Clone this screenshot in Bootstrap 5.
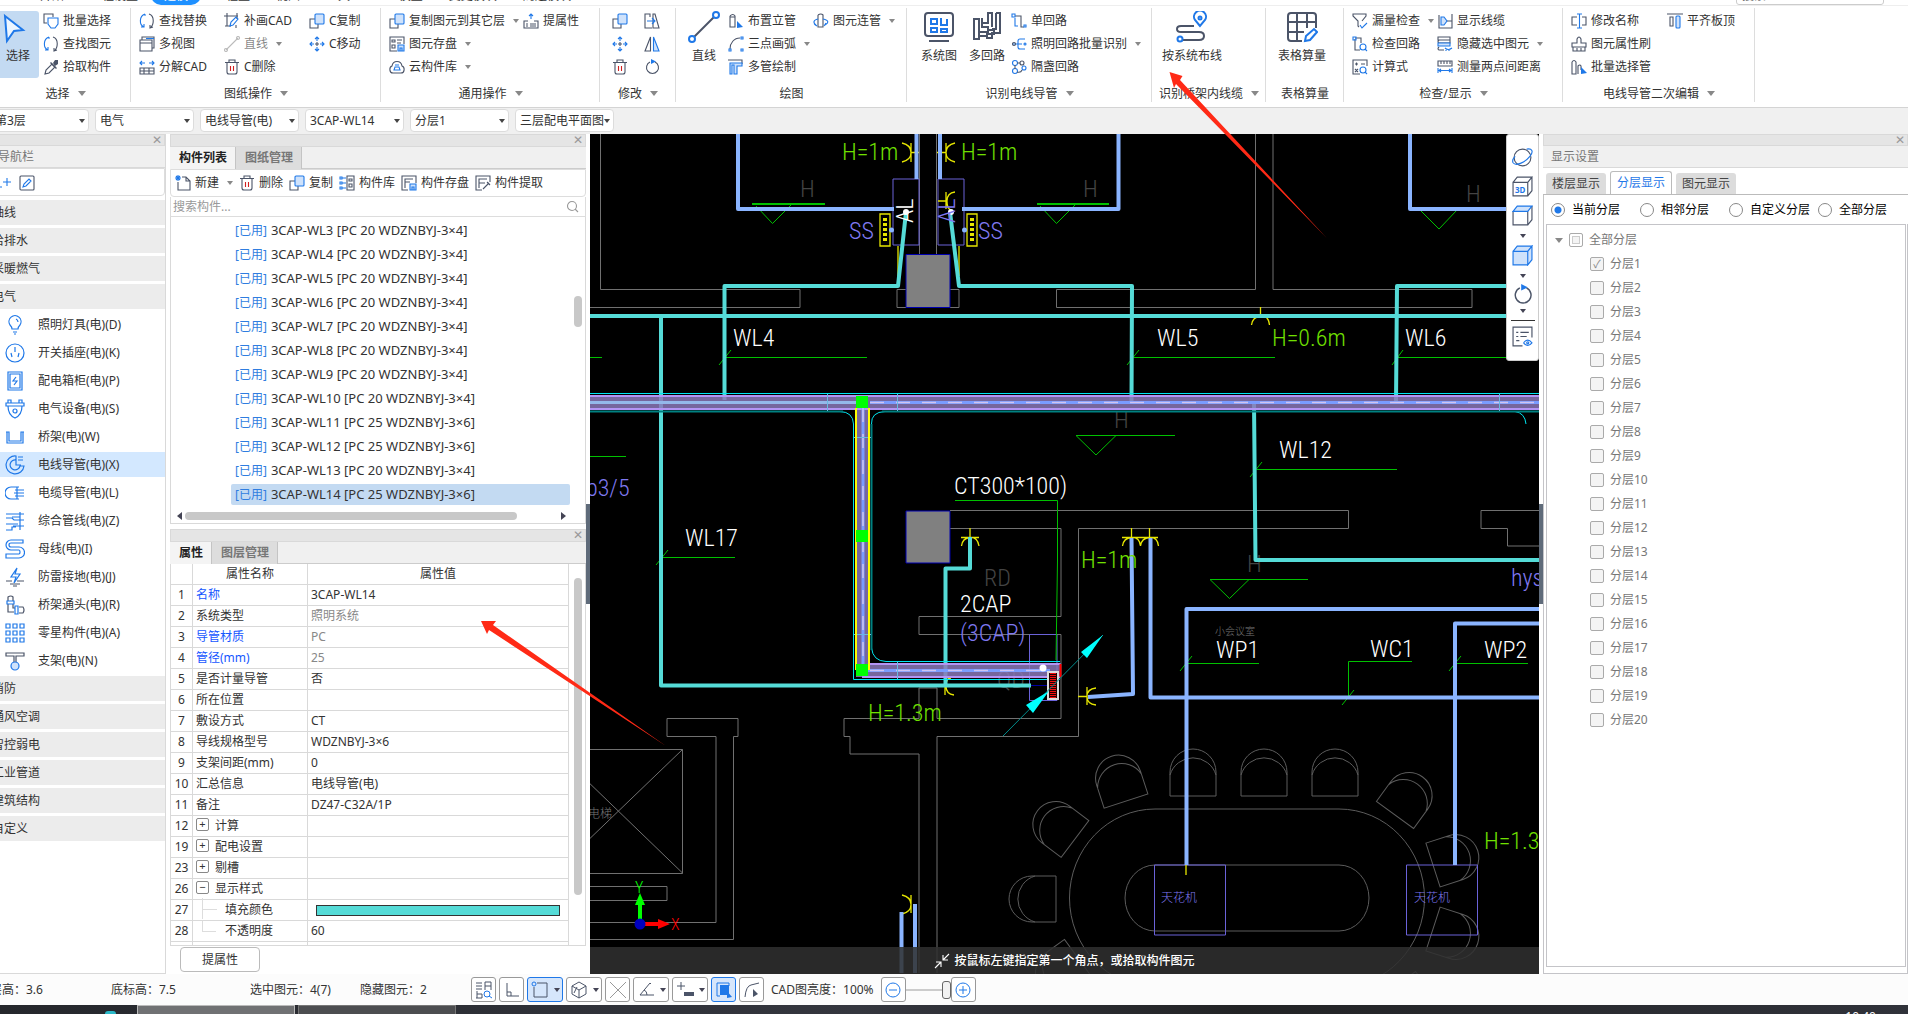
<!DOCTYPE html>
<html lang="zh-CN">
<head>
<meta charset="utf-8">
<meta name="viewport" content="width=device-width, initial-scale=1">
<title>安装算量</title>
<link rel="stylesheet" href="https://cdn.jsdelivr.net/npm/bootstrap@5.3.0/dist/css/bootstrap.min.css">
<style>
:root{--ink:#333;--blue:#1f78e8;--dark:#4b5468;--line:#d9d9d9;--grey:#f0f0f0}
body{font-family:"Noto Sans","Noto Sans CJK SC",sans-serif;font-size:12px;line-height:18px;color:var(--ink);background:#fff;height:100vh;overflow:hidden}
button{font:inherit;color:inherit;background:none;border:0;padding:0;white-space:nowrap}
svg{flex:none}
.ic{width:16px;height:16px;fill:none;stroke-width:1.1}
.d{stroke:var(--dark);fill:none}.b{stroke:var(--blue);fill:none}.r{stroke:#d02020;fill:none}
.bf{fill:var(--blue);stroke:none}.df{fill:var(--dark);stroke:none}.lf{fill:#cfe2fb;stroke:var(--blue)}
.caret{display:inline-block;border:4px solid transparent;border-top:5px solid #888;border-bottom:0;margin-left:8px;vertical-align:2px}
.caret.sm{border-width:3px;border-top-width:4px;margin-left:5px}
.menus{height:6px;border-bottom:1px solid #eee}
.menus a{color:var(--ink);text-decoration:none;padding:0 13px;white-space:nowrap}
.menus a.on{background:#1e90ff;color:#fff;border-radius:0 0 10px 10px}
.menus .find{width:148px;height:18px;border:1px solid #ccc;border-radius:3px;font-size:12px;padding:0 5px}
/* ribbon */
.ribbon{height:102px;border-bottom:1px solid #d4d4d4}
.grp{display:flex;flex-direction:column;position:relative;padding-top:3px}
.grp::after{content:"";position:absolute;right:0;top:2px;bottom:5px;width:1px;background:#ddd}
.grp .cols{display:flex;height:69px}
.grp .lab{margin-top:7px;text-align:center;white-space:nowrap}
.rb{display:flex;align-items:center;gap:4px;height:23px}
.rb .caret{margin-left:4px}
.big{display:flex;flex-direction:column;align-items:center;width:48px}
.big svg{width:32px;height:32px;margin:2px 0 4px;stroke-width:2}
.big.on{background:#c3daf2;border-radius:0 3px 3px 0;width:39px;height:67px;margin:2px 4px 0 0;padding-right:3px}
.big.on svg{margin:2px 0 2px}
.c84{width:85px}.c96{width:96px}.c134{width:134px}.c32{width:32px}
.g1{width:131px}.g2{width:250px}.g3{width:219px}.g4{width:76px}.g5{width:231px}.g6{width:245px}.g7{width:114px}.g8{width:78px}.g9{width:219px}.g10{width:192px}
/* context selectors */
.ctxbar{background:var(--grey)}
.ctx{height:26px;padding-top:1px;gap:6px;margin-left:-10px}
.pick{position:relative;width:99px;height:23px}
.pick select{appearance:none;width:100%;height:100%;border:1px solid #dcdcdc;border-radius:4px;background:#fff;padding:0 0 0 4px;color:var(--ink);font-size:12px}
.pick::after{content:"";position:absolute;right:4px;top:10px;border:3px solid transparent;border-top:4px solid #444;border-bottom:0;pointer-events:none}
/* docks */
.strip{height:12px;background:#e5e5e5;border:1px solid var(--line);padding-right:2px}
.strip button{line-height:9px;display:block;margin-left:auto;height:9px;color:#999}
.mid-dock .strip{height:13px}
.head{height:22px;background:var(--grey);border-bottom:1px solid var(--line);color:#777;line-height:21px}
.tools{height:28px;border:1px solid #ddd;border-radius:0 0 4px 4px}
.mid-dock .tools{gap:6px}
.nav-dock{width:176px;margin-left:-10px;border-right:1px solid var(--line);border-bottom:1px solid var(--line)}
.side-item{display:flex;align-items:center;height:25px;margin-bottom:3px;width:100%;text-align:left;padding-left:2px}
.side-item.cat{background:#ececec}
.side-item.leaf{padding-left:15px;gap:13px}
.side-item.leaf svg{width:20px;height:20px;stroke-width:1.2}
.side-item.on{background:#d3e8ff}
.mid-dock{width:416px;margin-left:4px}
.dtabs{height:22px;background:var(--grey);border-bottom:1px solid #ccc}
.dtabs button{height:22px;padding:0 8px 0 9px;background:#ddd;color:#777;font-weight:600;border-right:1px solid #c4c4c4}
.dtabs button.on{background:#f4f4f4;color:#222}
.finder{height:20px;border:1px solid #ddd;border-top:0}
.finder input{border:0;outline:0;width:100%;font-size:12px;padding:0 2px;height:18px;color:#555}
.finder input::placeholder{color:#999}
.list{height:307px;border:1px solid var(--line);border-top:0;position:relative;padding:3px 15px 0 60px;overflow:hidden;margin-bottom:5px}
.list button{display:block;width:100%;height:21px;margin-bottom:3px;text-align:left;padding-left:4px;line-height:21px;border-radius:2px;font-size:13px}
.list button i{font-style:normal;font-size:12px;color:#2f7de0;margin-right:4px}
.list button.on{background:#c3daf2}
.thumb{position:absolute;background:#c8c8c8;border-radius:4px}
.v1{right:3px;top:79px;width:8px;height:31px}.h1b{left:14px;bottom:3px;width:332px;height:8px}
.v2{right:3px;top:14px;width:8px;height:317px}
.tri{position:absolute;bottom:3px;border:4px solid transparent}
.tri.l{left:2px;border-right:5px solid #445}.tri.rr{right:15px;border-left:5px solid #445}
.props{height:382px;border:1px solid var(--line);border-top:0;position:relative;overflow:hidden}
.props table{width:398px;table-layout:fixed;border-collapse:separate;border-spacing:0}
.props td,.props th{height:21px;padding:0 3px;border-bottom:1px solid var(--line);border-right:1px solid var(--line);line-height:20px;white-space:nowrap;font-weight:400}
.props th{text-align:center}
.props td:first-child{text-align:center;padding:0}
.props .key{color:#1657ff}.props .ro{color:#888}
.pm{width:13px;height:13px;border:1px solid #888;border-radius:2px;line-height:10px;font-size:11px;margin:0 6px 0 0;vertical-align:2px}
.twig{display:inline-block;width:14px;height:21px;border-left:1px solid #ddd;position:relative;margin:-10px 9px -6px 6px;vertical-align:middle}
.twig::after{content:"";position:absolute;left:0;top:11px;width:14px;border-top:1px solid #ddd}
.twig.end{height:11px;border-bottom:1px solid #ddd;margin-bottom:0}.twig.end::after{display:none}
.swatch{display:block;height:11px;background:#55dbd7;border:1px solid #333;margin:0 5px}
.more{width:80px;height:25px;border:1px solid #bbb;border-radius:4px;margin:1px 0 0 10px}
.split{width:4px;display:flex;align-items:center}
.split button{width:4px;height:100px;background:#5f6b7a}
/* drawing */
.board{background:#000;min-width:0;overflow:hidden}
.board>svg{position:absolute;left:0;top:0;width:949px;height:840px}
.board text{font-family:"Liberation Sans Narrow","Roboto Condensed",Roboto,sans-serif;font-weight:300;font-size:24px}
.board text.cj{font-family:"Noto Sans CJK SC",sans-serif}
.board text.c12{font-size:12px}.board text.c10{font-size:10px}.board text.ax{font-size:16px}
.board text.d3{font:700 8px "Noto Sans",sans-serif}
.tip{position:absolute;left:0;right:0;bottom:0;height:27px;background:rgba(48,48,48,.86);color:#fff;font-weight:500}
.views{position:absolute;right:0;top:0;width:33px;height:227px;background:#fff;border:1px solid #ccc;border-radius:3px;padding-top:12px}
.views svg{width:21px;height:21px;stroke-width:1.1;margin-bottom:8px}
.views .caret{margin:0 0 7px;border-top-color:#445;border-width:3px;border-top-width:4px}
.views .flat{margin:-1px 0 4px}
.views hr{width:24px;margin:0 0 5px;border-color:#333;opacity:1}
.right-dock{width:365px}
.rtabs{height:27px;padding:5px 0 0 3px;gap:4px;border-bottom:1px solid #bbb}
.rtabs button{height:21px;padding:0 6px;background:#dcdcdc;border-radius:3px 3px 0 0;color:#444}
.rtabs button.on{background:#fff;color:var(--blue);border:1px solid #bbb;border-bottom:0;height:23px;margin-top:-2px}
.opts{height:29px;color:#000;border-left:1px solid #c4c4c4;gap:20px;padding-left:7px}
.opts label{display:flex;align-items:center;gap:7px;white-space:nowrap}
.opts label:last-child{margin-left:-12px}
.opts input{appearance:none;width:14px;height:14px;border:1px solid #888;border-radius:50%;margin:0}
.opts input:checked{background:radial-gradient(circle,var(--blue) 3px,#fff 4px)}
.tree{border:1px solid #c4c4c8;margin:0 1px 6px 2px;color:#777;padding-top:3px}
.tree label{display:flex;align-items:center;height:24px;gap:6px;padding-left:43px}
.tree label.top{padding-left:8px}
.tree input{appearance:none;width:14px;height:14px;border:1px solid #aaa;border-radius:2px;margin:0;background:#f4f4f4;text-align:center;line-height:12px}
.tree input:checked::before{content:"✓";color:#888;font-size:11px;display:block}
.tree .top input{box-shadow:inset 0 0 0 2px #fff,inset 0 0 0 3px #ccc}
.right-box{border:1px solid #c4c4c8;border-top:0}
/* status */
.status{height:31px;background:#fcfcfc;gap:3px}
.sb{height:25px;min-width:25px;border:1px solid #999;border-radius:3px;display:inline-flex;align-items:center;justify-content:center;background:#fff}
.sb svg{width:18px;height:18px}
.sb.on{background:#d6e6fb;border-color:var(--blue)}
.sb.w{width:36px}.sb .caret{border-top-color:#445}
.s1{width:118px;margin-left:-10px}.s2{width:136px}.s3{width:107px}.s4{width:104px}
.zoomer{appearance:none;width:45px;height:20px;background:linear-gradient(#ccc,#ccc) center/100% 2px no-repeat;margin:0 -3px}
.zoomer::-webkit-slider-thumb{appearance:none;width:9px;height:18px;border:1px solid #666;border-radius:3px;background:#f2f2f2}
.task{height:9px;background:linear-gradient(90deg,#25272c,#34363e 45%,#222325 65%,#30323a);padding-left:105px}
.task i{width:11px;height:3px;margin:6px 21px 0 0;background:#2ab8c8;border-radius:6px 6px 0 0}
.task div{height:9px;width:158px;border:1px solid #bbb;border-bottom:0;background:#707173;margin-right:3px}
.task div+div{background:#4c4d50;border-color:#777}
.task .clock{padding:3px 32px 0 0}
.marks{position:absolute;left:0;top:0;width:1908px;height:1014px;pointer-events:none;z-index:5}
</style>
<script src="https://cdn.jsdelivr.net/npm/bootstrap@5.3.0/dist/js/bootstrap.bundle.min.js"></script>
</head>
<body class="d-flex flex-column">

<svg width="0" height="0" class="position-absolute">
<symbol id="cursor" viewBox="0 0 32 32"><path d="M3 3l18 14-9 1-7 10z" stroke="#1f78e8" fill="#eef6ff"/></symbol>
<symbol id="multi" viewBox="0 0 16 16"><path class="d" d="M4 10H1V1h9v3"/><path class="b" d="M5 5h10v6l-3 4H8l-3-4z"/></symbol>
<symbol id="swap" viewBox="0 0 16 16"><path class="b" d="M6 1C0 3 0 12 5 14M2 14h3v-3M5 2h2"/><path class="d" d="M10 1c6 2 5 11 1 14M14 14l-3 1 0-3"/></symbol>
<symbol id="dropper" viewBox="0 0 16 16"><path class="d" d="M2 15l1-4 6-6 3 3-6 6z"/><path class="df" d="M8 3l6 6-1 1-6-6zM10 4l2-3h3v4l-3 2z"/></symbol>
<symbol id="window" viewBox="0 0 16 16"><path class="d" d="M3 4V1h12v11h-2M1 4h12v11H1zM1 7h12"/><path class="b" d="M7 2.500h8"/></symbol>
<symbol id="split" viewBox="0 0 16 16"><path class="b" d="M1 4h5M10 4h5M3 2L1 4l2 2M13 2l2 2-2 2"/><path class="d" d="M1 9h14v6H1zM5 9v6M10 9v6M1 12h14"/></symbol>
<symbol id="crop" viewBox="0 0 16 16"><path class="d" d="M3 0v13M0 3h14M1 13h6M13 0v6M12 12v3"/><path class="b" d="M6 13l1-4 5-5 2 2-5 6z"/></symbol>
<symbol id="lineoff" viewBox="0 0 16 16"><path stroke="#bbb" d="M2 14L14 2"/><circle cx="2" cy="14" r="1.500" stroke="#bbb"/><circle cx="14" cy="2" r="1.500" stroke="#bbb"/></symbol>
<symbol id="trash" viewBox="0 0 16 16"><path class="d" d="M1 3.500h14M5 3V1h6v2M3 4v9q0 2 2 2h6q2 0 2-2V4"/><path class="r" d="M6.500 7v5M9.500 7v5"/></symbol>
<symbol id="copy" viewBox="0 0 16 16"><path class="d" d="M6 6H1v9h8v-4"/><rect class="lf" x="6" y="1" width="9" height="10" rx="1"/></symbol>
<symbol id="move" viewBox="0 0 16 16"><path class="b" d="M8 1v4M8 11v4M1 8h4M11 8h4M6 3l2-2 2 2M6 13l2 2 2-2M3 6L1 8l2 2M13 6l2 2-2 2"/><path class="d" d="M6 8h4M8 6v4"/></symbol>
<symbol id="save" viewBox="0 0 16 16"><path class="d" d="M8 15H1V1h14v7M3 4h3v2H3zM3 9h3v3H3zM8 4h5M8 7h4"/><path class="lf" d="M9 9h6v6H9z"/><path class="b" d="M11 15v-3h2v3"/></symbol>
<symbol id="save2" viewBox="0 0 16 16"><path class="d" d="M7 15H1V1h14v7M4 13V4h8M4 7h5"/><path class="lf" d="M9 9h6v6H9z"/><path class="b" d="M11 15v-3h2v3"/></symbol>
<symbol id="cloud" viewBox="0 0 16 16"><path class="d" d="M4 14C0 14 0 8 3 7c1-6 9-6 10 0 3 1 3 7-1 7z"/><path class="b" d="M6 8h4l1 3H5zM6 6h4"/></symbol>
<symbol id="upprop" viewBox="0 0 16 16"><path class="b" d="M8 6V1M6 3l2-2 2 2"/><path class="d" d="M5 8H1v7h14V8h-4M3 11h2M7 11h6M3 13h2M7 13h6"/></symbol>
<symbol id="extend" viewBox="0 0 16 16"><path class="d" d="M6 4V1H1v14h7M9 1h2l4 14H9z"/><path class="b" d="M3 8h7M8 5l3 3-3 3"/></symbol>
<symbol id="mirror" viewBox="0 0 16 16"><path class="d" d="M6.500 1v14H1z"/><path class="lf" d="M9.500 1v14H15z"/></symbol>
<symbol id="rotate" viewBox="0 0 16 16"><path class="d" d="M11 3a6 6 0 1 1-5 0"/><path class="bf" d="M7 0l5 2.500L7 5z"/></symbol>
<symbol id="bigline" viewBox="0 0 32 32"><path class="d" d="M6 26L26 6"/><circle class="b" cx="4" cy="28" r="3"/><circle class="b" cx="28" cy="4" r="3"/></symbol>
<symbol id="riser" viewBox="0 0 16 16"><path class="d" d="M2 3v11h5V3q-2-3-5 0M2 4h5"/><path class="bf" d="M9 15V8l6 6z"/></symbol>
<symbol id="arc" viewBox="0 0 16 16"><path class="d" d="M2 13C2 7 6 2 12 2"/><path class="b" d="M13 1h2v2h-2zM1 13h2v2H1zM13 13h2v2h-2z"/></symbol>
<symbol id="pipes" viewBox="0 0 16 16"><path class="d" d="M0 1h14v4"/><path class="lf" d="M2 4h12v3H9v8H6V6H4v9H2z"/></symbol>
<symbol id="joint" viewBox="0 0 16 16"><path class="d" d="M5 2v12h5V2q-2-2-5 0"/><path class="b" d="M5 6C0 7 0 10 3 12M10 6c6 1 6 4 2 6M1 11l3 2M13 10l-2 3"/></symbol>
<symbol id="sys" viewBox="0 0 32 32"><rect class="d" x="2" y="2" width="28" height="23" rx="3"/><path class="b" d="M8 8h6v5H8zM18 7v7h6V8M8 17h6v4H8zM18 18h6v3h-6z"/><path class="d" d="M6 30h20"/></symbol>
<symbol id="loops" viewBox="0 0 32 32"><path class="d" d="M3 8h5v20H3zM8 21h9v-5h-6v-4h6V2h4v14M8 25h8v-2h7v-4h-6M25 2h4v20h-8v5h-5v-3M25 2v16h-4M11 12V7"/></symbol>
<symbol id="loop" viewBox="0 0 16 16"><path class="d" d="M4 3h6v11h3"/><path class="b" d="M1 1h3v3H1zM13 12h2v2h-2zM4 5v8h3"/></symbol>
<symbol id="tree3" viewBox="0 0 16 16"><path class="b" d="M1 8h10M14 3H9Q7 3 7 5v6q0 2 2 2h5"/><circle class="d" cx="3" cy="8" r="1.500"/><circle class="b" cx="14" cy="8" r="1"/></symbol>
<symbol id="rings" viewBox="0 0 16 16"><circle class="b" cx="4" cy="4" r="2.500"/><circle class="d" cx="11" cy="4" r="2"/><circle class="b" cx="4" cy="12" r="2.500"/><circle class="b" cx="13" cy="9" r="2"/><path class="d" d="M6 4h3M4 6v4M6 13q4 1 5-2"/></symbol>
<symbol id="route" viewBox="0 0 32 32"><path class="b" d="M24 15l-5-6a6 6 0 1 1 10 0z"/><circle class="b" cx="24" cy="7" r="1.500"/><path class="d" d="M18 15H5q-4 0-4 3t4 3h18q5 0 5 4t-5 4H7"/><circle class="b" cx="4" cy="28" r="2.500"/></symbol>
<symbol id="sheet" viewBox="0 0 32 32"><path class="d" d="M16 30H5q-3 0-3-3V5q0-3 3-3h22q3 0 3 3v12M2 11h28M2 21h16M11 2v28M21 2v15"/><path class="b" d="M19 30l1-5 8-7 3 3-7 8z"/></symbol>
<symbol id="funnel" viewBox="0 0 16 16"><path class="d" d="M7 14l-1-1V8L1 3V1h13v2l-4 5"/><path class="b" d="M8 12l2 3 5-5"/></symbol>
<symbol id="chk" viewBox="0 0 16 16"><path class="d" d="M3 3v11h5M3 2h6v5"/><path class="b" d="M1 1h3v3H1z"/><circle class="b" cx="11" cy="11" r="3"/><path class="b" d="M13 13l2 2"/></symbol>
<symbol id="calc" viewBox="0 0 16 16"><path class="d" d="M8 15H1V1h14v6M3 5h3M4.500 3.500v3M9 5h4M3 10l3 3M6 10l-3 3"/><circle class="b" cx="11" cy="11" r="3"/><path class="b" d="M13 13l2 2"/></symbol>
<symbol id="cable" viewBox="0 0 16 16"><path class="d" d="M2 2v13h13V1M5 8h10"/><path class="lf" d="M4 4h3l3 4-3 4H4z"/></symbol>
<symbol id="hide" viewBox="0 0 16 16"><path class="d" d="M1 1h12v3H1zM2 4q-2 2 0 3h11V4M2 11q-2 2 0 3h5"/><path class="lf" d="M1 7h12v3H1z"/><path class="b" d="M8 12q3 3 7 0M9 14v1M12 14v1"/></symbol>
<symbol id="ruler" viewBox="0 0 16 16"><path class="d" d="M1 2h14v5H1zM4 2v3M7 2v3M10 2v3M13 2v3"/><path class="b" d="M1 9v5M15 9v5M2 11.500h12M4 10l-2 1.500 2 1.500M12 10l2 1.500-2 1.500"/></symbol>
<symbol id="rename" viewBox="0 0 16 16"><path class="d" d="M6 4H1v8h5M11 4h4v8h-4"/><path class="b" d="M6 1h5M8.500 1v14M6 15h5"/></symbol>
<symbol id="brush" viewBox="0 0 16 16"><path class="d" d="M6 7V3q2-4 4 0v4h5v4H1V7zM2 11v4h12v-4M6 12v3M10 12v3"/></symbol>
<symbol id="selpipe" viewBox="0 0 16 16"><path class="d" d="M1 3v12h4V3Q3 0 1 3M7 15V7q2-2 3 0v4"/><path class="bf" d="M10 15V8l6 6z"/></symbol>
<symbol id="aligntop" viewBox="0 0 16 16"><path class="d" d="M0 1h16M3 4h3v9H3z"/><rect class="lf" x="9" y="3" width="4" height="12" rx="1"/></symbol>
<symbol id="newdoc" viewBox="0 0 16 16"><path class="d" d="M7 2h4l4 4v9H3V7M11 2v4h4"/><path class="b" d="M1 1l4 4M5 1L1 5M3 0v6M0 3h6"/></symbol>
<symbol id="lib" viewBox="0 0 16 16"><path class="d" d="M8 1h7v14H8zM10 4h3v2h-3zM10 9h3v3h-3z"/><path class="b" d="M1 2h2v2H1zM1 7h2v2H1zM1 12h2v2H1zM3 3h4M3 8h4M3 13h4"/></symbol>
<symbol id="extract" viewBox="0 0 16 16"><path class="d" d="M7 15H1V1h14v6M4 13V4h8M4 8h6M8 14l6-6"/><path class="d" d="M12 7l3 3"/></symbol>
<symbol id="edit" viewBox="0 0 16 16"><rect class="d" x="1" y="1" width="14" height="14" rx="1"/><path class="b" d="M4 12l1-3 5-5 2 2-5 5z"/></symbol>
<symbol id="star" viewBox="0 0 16 16"><path class="b" d="M8 3v8M4 7h8M1 12h2"/></symbol>
<symbol id="lens" viewBox="0 0 16 16"><circle cx="7" cy="7" r="4.500" stroke="#999"/><path stroke="#999" d="M10 10l3 3"/></symbol>
<symbol id="n0" viewBox="0 0 20 20"><path class="b" d="M7 14q0-2-2-4A6 6 0 1 1 15 10q-2 2-2 4zM8 17h4M9 19h2M11 4q2 1 2 3"/></symbol>
<symbol id="n1" viewBox="0 0 20 20"><circle class="b" cx="10" cy="10" r="9"/><path class="b" d="M10 4v5M6 10l1 4M14 10l-1 4"/></symbol>
<symbol id="n2" viewBox="0 0 20 20"><path class="b" d="M3 1h14v18H3zM5 3h10v14H5zM11 6l-3 4h4l-3 4"/></symbol>
<symbol id="n3" viewBox="0 0 20 20"><path class="b" d="M1 4h18v3H1zM3 4V1h3v3M14 4V1h3v3M3 7q0 9 7 12 7-3 7-12"/><circle class="b" cx="10" cy="12" r="2"/></symbol>
<symbol id="n4" viewBox="0 0 20 20"><path class="b" d="M1 5h3v9h12V5h3M2 5v11h16V5"/></symbol>
<symbol id="n5" viewBox="0 0 20 20"><path class="b" d="M11 1a9 9 0 1 0 8 10h-4a5 5 0 1 1-4-6zM11 5v5h5M13 2h5M13 5h5"/></symbol>
<symbol id="n6" viewBox="0 0 20 20"><path class="b" d="M14 4H6a6 6 0 0 0 0 12h8M10 7h5M9 10h10M10 13h5M12 4v12M15 7h4M15 13h4"/></symbol>
<symbol id="n7" viewBox="0 0 20 20"><path class="b" d="M1 3h18M1 7h6l2 2h10M7 6h8M1 13h12M8 15h11M1 19h6v-3h4M15 1v18"/></symbol>
<symbol id="n8" viewBox="0 0 20 20"><path class="b" d="M18 1H6a5 5 0 0 0 0 10h8q1 0 1 2t-1 2H1v4h13a5 5 0 0 0 0-11H6q-2 0-2-2t2-2h12z"/></symbol>
<symbol id="n9" viewBox="0 0 20 20"><path class="b" d="M12 1l-6 9h5l-2 6 6-9h-5z"/><path class="d" d="M1 14h6M12 14h7M5 17h10M8 19h4"/></symbol>
<symbol id="n10" viewBox="0 0 20 20"><path class="d" d="M3 6V2q3-2 5 0v4M3 9v8h6M8 9v4h2M14 12h4q2 3 0 6h-4"/><path class="b" d="M2 6h7v3H2zM10 11h3v8h-3z"/></symbol>
<symbol id="n11" viewBox="0 0 20 20"><path class="b" d="M1 1h4v4H1zM8 1h4v4H8zM15 1h4v4h-4zM1 8h4v4H1zM8 8h4v4H8zM15 8h4v4h-4zM1 15h4v4H1zM8 15h4v4H8zM15 15h4v4h-4z"/></symbol>
<symbol id="n12" viewBox="0 0 20 20"><path class="d" d="M1 2h18v3h-8v8H9V5H1z"/><circle class="lf" cx="10" cy="15" r="4"/></symbol>
<symbol id="orbit" viewBox="0 0 20 20"><circle class="d" cx="10" cy="10" r="8"/><path class="b" d="M14 2c5-1 7 2 3 7S4 19 1 15c-1-2 0-4 2-6"/></symbol>
<symbol id="cube3" viewBox="0 0 20 20"><path class="d" d="M1 6h14v13H1zM1 6l4-5h14l-4 5M19 1v13l-4 5"/></symbol>
<symbol id="cubet" viewBox="0 0 20 20"><path class="d" d="M1 6v13h14V6M19 1v13l-4 5"/><path class="lf" d="M1 6l4-5h14l-4 5z"/></symbol>
<symbol id="cubef" viewBox="0 0 20 20"><path class="lf" d="M1 6h14v13H1zM1 6l4-5h14l-4 5M19 1v13l-4 5V6z"/></symbol>
<symbol id="legend" viewBox="0 0 20 20"><path class="d" d="M10 19H1V1h18v10M4 6h2M8 6h8M4 10h2M8 10h6M4 14h3"/><path class="b" d="M11 16q4-5 8 0-4 5-8 0"/><circle class="b" cx="15" cy="16" r="1"/></symbol>
<symbol id="s0" viewBox="0 0 18 18"><path class="d" d="M1 2h6M1 5h6M1 8h6M10 9V1h6v8M10 5h6M2 10v7M2 13h5v4H1"/><circle class="b" cx="12" cy="13" r="3"/><path class="b" d="M14 15l3 2"/></symbol>
<symbol id="s1" viewBox="0 0 18 18"><path class="d" d="M4 2v13h12M4 11h4v4"/></symbol>
<symbol id="s2" viewBox="0 0 18 18"><path class="d" d="M6 2h10v14H3V6"/><circle class="b" cx="3" cy="3" r="2"/></symbol>
<symbol id="s3" viewBox="0 0 18 18"><path class="d" d="M9 1l7 4v8l-7 4-7-4V5zM2 5l7 4 7-4M9 9v8M4 12l3-6"/></symbol>
<symbol id="s4" viewBox="0 0 18 18"><path stroke="#999" d="M1 1l16 16M17 1L1 17"/></symbol>
<symbol id="s5" viewBox="0 0 18 18"><path class="d" d="M13 2L3 14h14M13 2l1 1M7 9q3 1 3 5"/></symbol>
<symbol id="s6" viewBox="0 0 18 18"><path class="d" d="M1 5h8M5 1v8"/><rect x="8" y="11" width="10" height="4" fill="#4b5468"/></symbol>
<symbol id="s7" viewBox="0 0 18 18"><path class="b" d="M5 15H2V2h12v3"/><rect x="5" y="4" width="9" height="10" fill="#1f78e8"/><path class="bf" d="M12 10l5 6-5 1z"/></symbol>
<symbol id="s8" viewBox="0 0 18 18"><path class="d" d="M2 16Q3 5 8 4l8-2"/><path class="df" d="M10 8l5 5-5 3z"/></symbol>
<symbol id="minus" viewBox="0 0 18 18"><circle class="b" cx="9" cy="9" r="7"/><path class="b" d="M5 9h8"/></symbol>
<symbol id="plus" viewBox="0 0 18 18"><circle class="b" cx="9" cy="9" r="7"/><path class="b" d="M5 9h8M9 5v8"/></symbol>
<symbol id="inward" viewBox="0 0 16 16"><path stroke="#fff" d="M15 1l-6 6M9 2v5h5M1 15l6-6M2 9h5v5"/></symbol>
</svg>

<nav class="menus d-flex align-items-end overflow-hidden">
  <a href="#" class="ms-3 ps-4">开始</a><a href="#">工程设置</a><a href="#" class="on">建模</a><a href="#">工程量</a><a href="#">视图</a><a href="#">工具</a><a href="#">BIM模型</a><a href="#">变更模块</a><a href="#">周边模块</a>
  <input class="find ms-auto me-4" aria-label="搜索" placeholder="搜索...">
</nav>

<div class="ribbon d-flex">
  <div class="grp g1"><div class="cols"><button class="big on"><svg><use href="#cursor"/></svg>选择</button>
    <div><button class="rb"><svg class="ic"><use href="#multi"/></svg>批量选择</button><button class="rb"><svg class="ic"><use href="#swap"/></svg>查找图元</button><button class="rb"><svg class="ic"><use href="#dropper"/></svg>拾取构件</button></div></div>
    <div class="lab">选择<span class="caret"></span></div></div>
  <div class="grp g2"><div class="cols ps-2">
    <div class="c84"><button class="rb"><svg class="ic"><use href="#swap"/></svg>查找替换</button><button class="rb"><svg class="ic"><use href="#window"/></svg>多视图</button><button class="rb"><svg class="ic"><use href="#split"/></svg>分解CAD</button></div>
    <div class="c84"><button class="rb"><svg class="ic"><use href="#crop"/></svg>补画CAD</button><button class="rb text-black-50"><svg class="ic"><use href="#lineoff"/></svg>直线<span class="caret sm"></span></button><button class="rb"><svg class="ic"><use href="#trash"/></svg>C删除</button></div>
    <div><button class="rb"><svg class="ic"><use href="#copy"/></svg>C复制</button><button class="rb"><svg class="ic"><use href="#move"/></svg>C移动</button></div></div>
    <div class="lab">图纸操作<span class="caret"></span></div></div>
  <div class="grp g3"><div class="cols ps-2">
    <div class="c134"><button class="rb"><svg class="ic"><use href="#copy"/></svg>复制图元到其它层<span class="caret sm"></span></button><button class="rb"><svg class="ic"><use href="#save"/></svg>图元存盘<span class="caret sm"></span></button><button class="rb"><svg class="ic"><use href="#cloud"/></svg>云构件库<span class="caret sm"></span></button></div>
    <div><button class="rb"><svg class="ic"><use href="#upprop"/></svg>提属性</button></div></div>
    <div class="lab">通用操作<span class="caret"></span></div></div>
  <div class="grp g4"><div class="cols ps-2 ms-1">
    <div class="c32"><button class="rb" aria-label="复制"><svg class="ic"><use href="#copy"/></svg></button><button class="rb" aria-label="移动"><svg class="ic"><use href="#move"/></svg></button><button class="rb" aria-label="删除"><svg class="ic"><use href="#trash"/></svg></button></div>
    <div><button class="rb" aria-label="延伸"><svg class="ic"><use href="#extend"/></svg></button><button class="rb" aria-label="镜像"><svg class="ic"><use href="#mirror"/></svg></button><button class="rb" aria-label="旋转"><svg class="ic"><use href="#rotate"/></svg></button></div></div>
    <div class="lab">修改<span class="caret"></span></div></div>
  <div class="grp g5"><div class="cols ps-1"><button class="big"><svg><use href="#bigline"/></svg>直线</button>
    <div class="c84"><button class="rb"><svg class="ic"><use href="#riser"/></svg>布置立管</button><button class="rb"><svg class="ic"><use href="#arc"/></svg>三点画弧<span class="caret sm"></span></button><button class="rb"><svg class="ic"><use href="#pipes"/></svg>多管绘制</button></div>
    <div><button class="rb"><svg class="ic"><use href="#joint"/></svg>图元连管<span class="caret sm"></span></button></div></div>
    <div class="lab">绘图</div></div>
  <div class="grp g6"><div class="cols ps-2"><button class="big"><svg><use href="#sys"/></svg>系统图</button><button class="big"><svg><use href="#loops"/></svg>多回路</button>
    <div><button class="rb"><svg class="ic"><use href="#loop"/></svg>单回路</button><button class="rb"><svg class="ic"><use href="#tree3"/></svg>照明回路批量识别<span class="caret sm"></span></button><button class="rb"><svg class="ic"><use href="#rings"/></svg>隔盏回路</button></div></div>
    <div class="lab">识别电线导管<span class="caret"></span></div></div>
  <div class="grp g7"><div class="cols ps-3"><button class="big"><svg><use href="#route"/></svg>按系统布线</button></div>
    <div class="lab">识别桥架内线缆<span class="caret"></span></div></div>
  <div class="grp g8"><div class="cols ps-2 ms-1"><button class="big"><svg><use href="#sheet"/></svg>表格算量</button></div>
    <div class="lab">表格算量</div></div>
  <div class="grp g9"><div class="cols ps-2">
    <div class="c84"><button class="rb"><svg class="ic"><use href="#funnel"/></svg>漏量检查<span class="caret sm"></span></button><button class="rb"><svg class="ic"><use href="#chk"/></svg>检查回路</button><button class="rb"><svg class="ic"><use href="#calc"/></svg>计算式</button></div>
    <div><button class="rb"><svg class="ic"><use href="#cable"/></svg>显示线缆</button><button class="rb"><svg class="ic"><use href="#hide"/></svg>隐藏选中图元<span class="caret sm"></span></button><button class="rb"><svg class="ic"><use href="#ruler"/></svg>测量两点间距离</button></div></div>
    <div class="lab">检查/显示<span class="caret"></span></div></div>
  <div class="grp g10"><div class="cols ps-2">
    <div class="c96"><button class="rb"><svg class="ic"><use href="#rename"/></svg>修改名称</button><button class="rb"><svg class="ic"><use href="#brush"/></svg>图元属性刷</button><button class="rb"><svg class="ic"><use href="#selpipe"/></svg>批量选择管</button></div>
    <div><button class="rb"><svg class="ic"><use href="#aligntop"/></svg>平齐板顶</button></div></div>
    <div class="lab">电线导管二次编辑<span class="caret"></span></div></div>
</div>

<div class="ctxbar"><div class="ctx d-flex">
  <div class="pick"><select aria-label="楼层"><option>第3层</option></select></div>
  <div class="pick"><select aria-label="专业"><option>电气</option></select></div>
  <div class="pick"><select aria-label="构件类型"><option>电线导管(电)</option></select></div>
  <div class="pick"><select aria-label="构件"><option>3CAP-WL14</option></select></div>
  <div class="pick"><select aria-label="分层"><option>分层1</option></select></div>
  <div class="pick"><select aria-label="图纸"><option>三层配电平面图</option></select></div>
</div></div>

<main class="d-flex flex-grow-1 overflow-hidden">
  <aside class="nav-dock flex-shrink-0">
    <div class="strip"><button aria-label="关闭">✕</button></div>
    <div class="head ps-2">导航栏</div>
    <div class="tools d-flex align-items-center ps-1 gap-1 mb-1"><button aria-label="新增"><svg class="ic ms-1"><use href="#star"/></svg></button><button aria-label="编辑"><svg class="ic"><use href="#edit"/></svg></button></div>
    <div id="nav"></div>
  </aside>

  <section class="mid-dock flex-shrink-0 d-flex flex-column">
    <div class="strip"><button aria-label="关闭">✕</button></div>
    <div class="dtabs d-flex"><button class="on">构件列表</button><button>图纸管理</button></div>
    <div class="tools d-flex align-items-center ps-1">
      <button class="rb"><svg class="ic"><use href="#newdoc"/></svg>新建<span class="caret sm"></span></button>
      <button class="rb"><svg class="ic"><use href="#trash"/></svg>删除</button>
      <button class="rb"><svg class="ic"><use href="#copy"/></svg>复制</button>
      <button class="rb"><svg class="ic"><use href="#lib"/></svg>构件库</button>
      <button class="rb"><svg class="ic"><use href="#save2"/></svg>构件存盘</button>
      <button class="rb"><svg class="ic"><use href="#extract"/></svg>构件提取</button>
    </div>
    <div class="finder d-flex align-items-center pe-1"><input type="search" aria-label="搜索构件" placeholder="搜索构件..."><svg class="ic"><use href="#lens"/></svg></div>
    <div class="list" id="list"></div>
    <div class="strip"><button aria-label="关闭">✕</button></div>
    <div class="dtabs d-flex"><button class="on">属性</button><button>图层管理</button></div>
    <div class="props"><table><colgroup><col width="22"><col width="115"><col></colgroup><thead><tr><th></th><th>属性名称</th><th>属性值</th></tr></thead><tbody id="props"></tbody></table><span class="thumb v2"></span></div>
    <button class="more">提属性</button>
  </section>
  <div class="split"><button aria-label="收起左侧"></button></div>

  <section class="board flex-grow-1 position-relative">
    <svg viewBox="590 134 949 840" fill="none">
      <g stroke="#707070">
        <path d="M600.500 134V289.500H800V307.500H590M919.500 134V254M936.500 134V254M897 289.500h62v18h-62zM1255.500 134V289.500H1056.500V307.500H1472V289.500H1273V134"/>
        <path d="M950 510.500H1348.500V528.500H1078.500V736.500H937V973M950 528.500H1061V616.500H919V634.500H1061V718.500H937V688H919V718.500H844V736.500H850V754H919V973"/>
        <path d="M590 922.500H716V736.500H667V718.500H738V736.500H733.500V939.500H590M590 749.500H682.500V873.500H590M682.500 749.500L554 873M682.500 873L554 749M590 886.500H667V900.500H590M1539 510.500H1481V528.500H1507.500V546H1539"/>
      </g>
      <g stroke="#5c5c5c">
        <path d="M1155 809H1339A85.500 89 0 0 1 1339 987H1155A85.500 89 0 0 1 1155 809ZM1155 865H1339A30 33 0 0 1 1339 931H1155A30 33 0 0 1 1155 865Z"/>
        <g id="seats"></g>
      </g>
      <g stroke="#0000b0" fill="#808080"><path d="M906 254.500h44v53h-44zM906 511h44v52h-44z"/></g>
      <g stroke="#6a62d8"><path d="M893 179h26v66h-26zM938 179h26v66h-26zM1029.500 634.500h27.500v66h-27.500zM1154.500 865h71v70h-71zM1406.500 865h71v70h-71z"/></g>
      <g fill="#444"><text x="800" y="197">H</text><text x="1083" y="197">H</text><text x="1466" y="202">H</text><text x="1114" y="428">H</text><text x="1247" y="572">H</text><text x="984" y="586">RD</text><text x="997" y="688">QD</text></g>
      <g stroke="#00c000">
        <path stroke-width="2" d="M752 204h73M1037 204h72"/>
        <path d="M756 206l16.500 17.500L791 205M1040 206l16.500 17.500L1075 205M1420 210l19 19 18-19M1175 435.500H1076l20 19.500 20-19.500M1308 579.500H1210l19.500 19 19.500-19"/>
        <path d="M590 357.500h12M590 456.500h36M726 357.500h141M719 365l12-15M1134 357.500h141M1127 365l12-15M1398 357.500h141M1392 365l11-15M1257 469.500h140M1250 477l12-15M663 557.500h72M656 565l12-15M955 500.500h102.500V560l-1.500 100M1188 663.500h71M1180 671l12-15M1412 661.500h-63.500V697M1342 705l12-15M1457 663.500h71M1449 671l12-15"/>
      </g>
      <g stroke="#e6e600" stroke-width="1.300">
        <path d="M902 143q9 2 9 9.500t-9 9.500M911 143v19M911 152.500h8M955 143q-9 2-9 9.500t9 9.500M946 143v19M946 152.500h-9M955 192q-8 1-8 9t4 9M946 192v17M938 201h8M880 214h10v32h-10zM967 214h10v32h-10zM898 246v30M959 246v30"/>
        <path stroke-dasharray="3 2" stroke-width="4" d="M885 218v25M972 218v25"/>
        <path d="M1251.500 325q1-8 9-9t9 9M1260.500 307v8M970 528v9M961 537.500h18M961.500 546q1-8 8.500-8.500t9 8.500M945 678v17M954 695q-8-1-8-9t5-8M1131.500 528v9M1149.500 528v9M1122 537.500h36M1122.500 546q1-8 9-8.500t9 8.500q1-8 9-8.500t9 8.500M1087 687v18M1096 688q-9 1-9 8.500t9 8.500M1078 696.500h9M902 895q9 2 9 9.500t-9 9.500M911 895v18M1186 865v10"/>
      </g>
      <g stroke="#55dbd7" stroke-width="4" stroke-linejoin="round">
        <path d="M906 212L898 286H724.500V400M950 212L959 286H1132L1131.500 402M1539 286H1397L1396 402M590 316H1539M661 316V685.500H1031M1254 403L1255.500 560H1539M970 537V568.500H945.500V684"/>
      </g>
      <g stroke="#8ab4ff" stroke-width="4" stroke-linejoin="round">
        <path d="M738 134V209H894M916.500 134V179M940 134V179M962 209H1118.500V134M1410 134V209H1539M1131.500 538L1133 694 1088 697M1150.500 538V697.500H1539M1539 609H1186.500V865M1539 623.500H1455V865M901.500 912V973M915 904V973"/>
      </g>
      <g fill="#8ab4ff"><circle cx="891.500" cy="230" r="2.500"/><circle cx="964.500" cy="230" r="2.500"/></g>
      <path fill="#8b78b8" fill-opacity=".85" d="M590 395H1539V410H870V663H1061V677H856V410H590z"/>
      <g stroke="#b394f5" stroke-width="2"><path d="M590 396H1539M590 409H1539M870 664H1060M862 677H1060"/></g>
      <path stroke="#94b8ea" stroke-width="3" d="M590 402.500H858"/>
      <path stroke="#7a9cff" stroke-width="3" d="M870 402.500H1539M863 408V670.500H1050"/>
      <path stroke="#d0c4f0" stroke-width="1.500" stroke-dasharray="14 12" d="M870 402.500H1539M863 408V670M870 670.500H1050"/>
      <path stroke="#00e5f0" d="M590 393.500H1539M853.500 424V679.500H1060M840 411.500Q853 412 853.500 424M885 411.500Q871 412 871.500 424M871.500 648Q873 661 886 661.500H1060M1515 411.500Q1525 413 1526 424"/>
      <path stroke="#008080" stroke-width="2" d="M590 411.500H843M882 411.500H1539M871.500 424V650"/>
      <path stroke="#6ab8e0" d="M827.500 394v17M897.500 394v17M1499.500 394v17M854 437.500h17M854 634.500h17M897.500 662v17"/>
      <path stroke="#ff0" stroke-width="2" d="M856 408V670M869 408V670"/>
      <path fill="#0f0" d="M856 396h12v12h-12zM856 530h12v12h-12zM856 664h12v12h-12z"/>
      <path stroke="#f00" stroke-width="2" d="M1060.500 664v13"/>
      <g fill="#fff"><circle cx="906" cy="212" r="3"/><circle cx="951" cy="212" r="3"/><circle cx="1043" cy="668" r="3.500"/></g>
      <path stroke="#0000a0" d="M1031 685.500h20"/>
      <path stroke="#ddd" stroke-width="2" fill="#200" d="M1048 672h10v27h-10z"/>
      <path stroke="#f01010" stroke-width="6" stroke-dasharray="1 1" d="M1053 673v25"/>
      <path stroke="#008b8b" d="M1003 736L1103 635"/><path fill="#0ff" d="M1049 691l-23 14 7 8zM1103 635l-22 17 6 6z"/>
      <g fill="#fff">
        <text x="733" y="346">WL4</text><text x="1157" y="346">WL5</text><text x="1405" y="346">WL6</text><text x="1279" y="458">WL12</text><text x="685" y="546">WL17</text>
        <text x="954" y="494">CT300*100)</text><text x="960" y="612">2CAP</text><text x="1216" y="658">WP1</text><text x="1370" y="657">WC1</text><text x="1484" y="658">WP2</text>
        <text transform="translate(913 223) rotate(-90)">AL</text>
      </g>
      <g fill="#7f78f0">
        <text x="849" y="239">SS</text><text x="978" y="239">SS</text><text x="586" y="496">b3/5</text><text x="960" y="641">(3CAP)</text><text x="1511" y="586">hys</text>
        <text transform="translate(955 223) rotate(-90)">AL</text>
        <text class="cj c12" x="1161" y="902">天花机</text><text class="cj c12" x="1414" y="902">天花机</text>
      </g>
      <g fill="#70e000">
        <text x="842" y="160">H=1m</text><text x="961" y="160">H=1m</text><text x="1272" y="346">H=0.6m</text><text x="1081" y="568">H=1m</text><text x="868" y="721">H=1.3m</text><text x="1484" y="849">H=1.3m</text>
      </g>
      <g fill="#777"><text class="cj c12" x="612" y="818" text-anchor="end">无障碍电梯</text><text class="cj c10" x="1215" y="635">小会议室</text></g>
      <path stroke="#0f0" stroke-width="4" d="M640 922V903"/><path fill="#0f0" d="M635 905l5-12 5 12z"/>
      <path stroke="#f00" stroke-width="4" d="M643 924h17"/><path fill="#f00" d="M658 919l12 5-12 5z"/><circle cx="640" cy="924" r="5.500" fill="#0000c0"/>
      <text class="ax" x="635" y="893" fill="#0f0">Y</text><text class="ax" x="671" y="930" fill="#f00">X</text>
    </svg>
    <div class="tip d-flex align-items-center justify-content-center"><svg class="ic me-1"><use href="#inward"/></svg>按鼠标左键指定第一个角点，或拾取构件图元</div>
    <div class="views d-flex flex-column align-items-center">
      <svg><use href="#orbit"/></svg>
      <svg><use href="#cube3"/><text class="d3" x="3" y="17" fill="#1f78e8">3D</text></svg>
      <svg><use href="#cubet"/></svg><span class="caret"></span>
      <svg><use href="#cubef"/></svg><span class="caret"></span>
      <svg class="flat"><use href="#rotate"/></svg><span class="caret"></span>
      <hr><svg><use href="#legend"/></svg>
    </div>
  </section>
  <div class="split"><button aria-label="收起右侧"></button></div>

  <aside class="right-dock flex-shrink-0 d-flex flex-column">
    <div class="strip"><button aria-label="关闭">✕</button></div>
    <div class="head ps-2">显示设置</div>
    <div class="rtabs d-flex"><button>楼层显示</button><button class="on">分层显示</button><button>图元显示</button></div>
    <div class="opts d-flex align-items-center">
      <label><input type="radio" name="lay" checked>当前分层</label><label><input type="radio" name="lay">相邻分层</label><label><input type="radio" name="lay">自定义分层</label><label><input type="radio" name="lay">全部分层</label>
    </div>
    <div class="right-box flex-grow-1 d-flex"><div class="tree flex-grow-1" id="tree"><label class="top"><span class="caret m-0"></span><input type="checkbox">全部分层</label></div></div>
  </aside>
</main>

<footer class="status d-flex align-items-center">
  <span class="s1">层高：3.6</span><span class="s2">底标高：7.5</span><span class="s3">选中图元：4(7)</span><span class="s4 me-1">隐藏图元：2</span>
  <button class="sb" aria-label="查找"><svg><use href="#s0"/></svg></button><button class="sb" aria-label="正交"><svg><use href="#s1"/></svg></button>
  <button class="sb w on" aria-label="框选"><svg><use href="#s2"/></svg><span class="caret sm"></span></button><button class="sb w" aria-label="三维"><svg><use href="#s3"/></svg><span class="caret sm"></span></button>
  <button class="sb" aria-label="交点"><svg><use href="#s4"/></svg></button><button class="sb w" aria-label="角度"><svg><use href="#s5"/></svg><span class="caret sm"></span></button>
  <button class="sb w" aria-label="偏移"><svg><use href="#s6"/></svg><span class="caret sm"></span></button><button class="sb on" aria-label="图层"><svg><use href="#s7"/></svg></button><button class="sb" aria-label="折线"><svg><use href="#s8"/></svg></button>
  <label for="lum" class="mx-1">CAD图亮度：100%</label>
  <button class="sb" aria-label="降低"><svg><use href="#minus"/></svg></button><input id="lum" class="zoomer" type="range" value="100"><button class="sb" aria-label="提高"><svg><use href="#plus"/></svg></button>
</footer>
<div class="task d-flex overflow-hidden"><i></i><div></div><div></div><span class="clock ms-auto text-white">10:40</span></div>

<svg class="marks" viewBox="0 0 1908 1014" fill="#ff2a16"><path d="M1169.500 72l13 4-2.500 4L1326.700 238 1176 84l-2 4zM481 621h15l-3 4L666 746 489 630l-2 4z"/></svg>

<script>
const cats=(a)=>a.map(t=>`<button class="side-item cat">${t}</button>`).join('');
const leaves=['照明灯具(电)(D)','开关插座(电)(K)','配电箱柜(电)(P)','电气设备(电)(S)','桥架(电)(W)','电线导管(电)(X)','电缆导管(电)(L)','综合管线(电)(Z)','母线(电)(I)','防雷接地(电)(J)','桥架通头(电)(R)','零星构件(电)(A)','支架(电)(N)'];
document.getElementById('nav').innerHTML=cats(['轴线','给排水','采暖燃气','电气'])+leaves.map((t,i)=>`<button class="side-item leaf${i==5?' on':''}"><svg><use href="#n${i}"/></svg>${t}</button>`).join('')+cats(['消防','通风空调','智控弱电','工业管道','建筑结构','自定义']);
let rows='';
for(let n=3;n<15;n++){const six=[11,12,14].includes(n);rows+=`<button class="${n==14?'on':''}"><i>[已用]</i>3CAP-WL${n} [PC ${six?25:20} WDZNBYJ-3×${six?6:4}]</button>`}
document.getElementById('list').innerHTML=rows+'<span class="thumb v1"></span><span class="thumb h1b"></span><span class="tri l"></span><span class="tri rr"></span>';
const pm=s=>`<button class="pm">${s}</button>`;
const P=[[1,'名称','3CAP-WL14','key'],[2,'系统类型','照明系统','','ro'],[3,'导管材质','PC','key','ro'],[4,'管径(mm)','25','key','ro'],[5,'是否计量导管','否'],[6,'所在位置',''],[7,'敷设方式','CT'],[8,'导线规格型号','WDZNBYJ-3×6'],[9,'支架间距(mm)','0'],[10,'汇总信息','电线导管(电)'],[11,'备注','DZ47-C32A/1P'],[12,pm('+')+'计算',''],[19,pm('+')+'配电设置',''],[23,pm('+')+'剔槽',''],[26,pm('−')+'显示样式',''],[27,'<span class="twig"></span>填充颜色','<span class="swatch"></span>'],[28,'<span class="twig end"></span>不透明度','60'],['','','']];
document.getElementById('props').innerHTML=P.map(r=>`<tr><td>${r[0]}</td><td class="${r[3]||''}">${r[1]}</td><td class="${r[4]||''}">${r[2]}</td></tr>`).join('');
let t='';for(let n=1;n<21;n++)t+=`<label><input type="checkbox"${n==1?' checked':''}>分层${n}</label>`;
document.getElementById('tree').insertAdjacentHTML('beforeend',t);
const S=[[1193,796,0],[1264,796,0],[1335,796,0],[1126,801,-18],[1395,815,36],[1075,839,-53],[1056,899,-90],[1078,958,-126],[1433,865,72],[1433,929,108],[1397,985,144]];
document.getElementById('seats').innerHTML=S.map(([x,y,a])=>`<path transform="translate(${x} ${y}) rotate(${a})" d="M-23 0V-24A23 23 0 0 1 23-24V0ZM-23-21A24 24 0 0 1 23-21"/>`).join('');
</script>
</body>
</html>
